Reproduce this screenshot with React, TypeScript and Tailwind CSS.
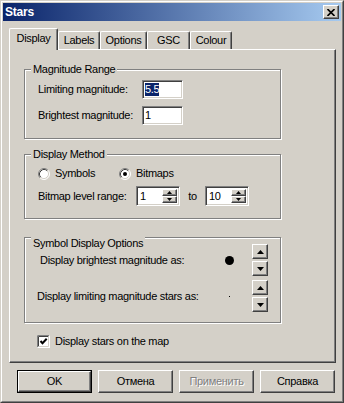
import React from "react";

const raised =
  "border border-t-white border-l-white border-r-[#404040] border-b-[#404040] shadow-[inset_-1px_-1px_0_#808080] bg-[#d4d0c8]";
const sunken =
  "border border-t-[#808080] border-l-[#808080] border-r-white border-b-white shadow-[inset_1px_1px_0_#404040,inset_-1px_-1px_0_#d4d0c8] bg-white";

function Group({ title, className, children }: { title: string; className: string; children?: React.ReactNode }) {
  return (
    <div className={`w-[257px] border border-[#808080] shadow-[inset_1px_1px_0_#fff,1px_1px_0_#fff] ${className}`}>
      <div className="flex h-[13px] -mt-[7px] -mb-[6px] ml-[6px]">
        <span className="bg-[#d4d0c8] px-[2px] leading-[13px]">{title}</span>
      </div>
      {children}
    </div>
  );
}

function Radio({ checked }: { checked?: boolean }) {
  return (
    <svg width="12" height="12" viewBox="0 0 12 12">
      <circle cx="6" cy="6" r="5" fill="#fff" />
      <path d="M2.11 9.89 A5.5 5.5 0 0 1 9.89 2.11" fill="none" stroke="#808080" />
      <path d="M9.89 2.11 A5.5 5.5 0 0 1 2.11 9.89" fill="none" stroke="#fff" />
      <path d="M2.82 9.18 A4.5 4.5 0 0 1 9.18 2.82" fill="none" stroke="#404040" />
      <path d="M9.18 2.82 A4.5 4.5 0 0 1 2.82 9.18" fill="none" stroke="#d4d0c8" />
      {checked && <circle cx="6" cy="6" r="2" fill="#000" />}
    </svg>
  );
}

function Arrow({ up, w = 7 }: { up?: boolean; w?: number }) {
  const h = Math.ceil(w / 2);
  const pts = up ? `0,${h} ${w},${h} ${w / 2},0` : `0,0 ${w},0 ${w / 2},${h}`;
  return (
    <svg width={w} height={h} viewBox={`0 0 ${w} ${h}`}>
      <polygon points={pts} fill="#000" />
    </svg>
  );
}

function SpinEdit({ value }: { value: string }) {
  return (
    <div className={`${sunken} w-[44px] h-[20px] flex items-stretch p-[2px]`}>
      <span className="flex-1 pl-[1px] leading-[14px]">{value}</span>
      <div className="w-[15px] flex flex-col">
        <div className={`${raised} flex-1 flex items-center justify-center`}>
          <Arrow up w={5} />
        </div>
        <div className={`${raised} flex-1 flex items-center justify-center`}>
          <Arrow w={5} />
        </div>
      </div>
    </div>
  );
}

function BigSpin() {
  return (
    <div className="flex flex-col gap-[2px]">
      <div className={`${raised} w-[16px] h-[15px] flex items-center justify-center`}>
        <Arrow up />
      </div>
      <div className={`${raised} w-[16px] h-[15px] flex items-center justify-center`}>
        <Arrow />
      </div>
    </div>
  );
}

function Tab({ label, w, active }: { label: string; w: string; active?: boolean }) {
  return (
    <div
      className={`${w} ${
        active ? "h-[22px] -mb-px relative z-10 pt-[3px]" : "h-[18px] pt-[2px]"
      } bg-[#d4d0c8] border-t border-l border-r border-t-white border-l-white border-r-[#404040] shadow-[inset_-1px_0_0_#808080] rounded-t-[2px] text-center leading-[13px]`}
    >
      {label}
    </div>
  );
}

export default function App() {
  return (
    <div
      className="w-[344px] h-[403px] bg-[#d4d0c8] border border-t-[#d4d0c8] border-l-[#d4d0c8] border-r-[#404040] border-b-[#404040] text-[11px] tracking-[-0.3px] text-black"
      style={{ fontFamily: '"Liberation Sans", Arial, sans-serif' }}
    >
      <div className="h-full border border-t-white border-l-white border-r-[#808080] border-b-[#808080] p-px flex flex-col">
        <div className="h-[18px] flex items-center justify-between bg-[linear-gradient(to_right,#0a246a,#a6caf0)] pl-[2px] pr-[2px]">
          <span className="text-white font-bold text-[12px] tracking-[-0.2px]">Stars</span>
          <div className={`${raised} w-[16px] h-[14px] flex items-center justify-center`}>
            <svg width="8" height="7" viewBox="0 0 8 7">
              <path d="M0.5 0 L7.5 7 M7.5 0 L0.5 7" stroke="#000" strokeWidth="1.6" />
            </svg>
          </div>
        </div>

        <div className="pl-[6px] pt-[7px]">
          <div className="flex items-end h-[21px]">
            <Tab label="Display" w="w-[49px]" active />
            <Tab label="Labels" w="w-[42px]" />
            <Tab label="Options" w="w-[47px]" />
            <Tab label="GSC" w="w-[43px]" />
            <Tab label="Colour" w="w-[42px]" />
          </div>

          <div className="w-[327px] h-[314px] border border-t-white border-l-white border-r-[#404040] border-b-[#404040] shadow-[inset_-1px_-1px_0_#808080] pl-[14px] pt-[19px]">
            <Group title="Magnitude Range" className="h-[70px]">
              <div className="flex items-center mt-[10px] pl-[13px]">
                <span className="w-[104px]">Limiting magnitude:</span>
                <div className={`${sunken} w-[41px] h-[19px] flex items-center pl-[2px]`}>
                  <span className="bg-[#0a246a] text-white leading-[13px]">5.5</span>
                </div>
              </div>
              <div className="flex items-center mt-[7px] pl-[13px]">
                <span className="w-[104px]">Brightest magnitude:</span>
                <div className={`${sunken} w-[41px] h-[19px] flex items-center pl-[2px]`}>
                  <span className="leading-[13px]">1</span>
                </div>
              </div>
            </Group>

            <Group title="Display Method" className="h-[65px] mt-[15px]">
              <div className="flex items-center h-[13px] mt-[12px] pl-[13px]">
                <Radio />
                <span className="ml-[5px] w-[64px]">Symbols</span>
                <Radio checked />
                <span className="ml-[5px]">Bitmaps</span>
              </div>
              <div className="flex items-center mt-[6px] pl-[13px]">
                <span className="w-[98px]">Bitmap level range:</span>
                <SpinEdit value="1" />
                <span className="w-[25px] text-center">to</span>
                <SpinEdit value="10" />
              </div>
            </Group>

            <Group title="Symbol Display Options" className="h-[86px] mt-[18px] pt-[6px]">
              <div className="flex items-center">
                <span className="w-[195px] pl-[15px]">Display brightest magnitude as:</span>
                <div className="w-[18px] flex justify-center">
                  <div className="w-[9px] h-[9px] rounded-full bg-black" />
                </div>
                <div className="ml-[14px]">
                  <BigSpin />
                </div>
              </div>
              <div className="flex items-center mt-[4px]">
                <span className="w-[195px] pl-[12px]">Display limiting magnitude stars as:</span>
                <div className="w-[18px] flex justify-center">
                  <div className="w-px h-px bg-black" />
                </div>
                <div className="ml-[14px]">
                  <BigSpin />
                </div>
              </div>
            </Group>

            <div className="flex items-center mt-[10px] ml-[13px]">
              <svg width="13" height="13" viewBox="0 0 13 13">
                <rect x="0" y="0" width="13" height="13" fill="#fff" />
                <path d="M0.5 12.5 V0.5 H12.5" fill="none" stroke="#808080" />
                <path d="M0.5 12.5 H12.5 V0.5" fill="none" stroke="#fff" />
                <path d="M1.5 11.5 V1.5 H11.5" fill="none" stroke="#404040" />
                <path d="M1.5 11.5 H11.5 V1.5" fill="none" stroke="#d4d0c8" />
                <polyline points="3.5,6 5.5,8.2 9.7,3.8" fill="none" stroke="#000" strokeWidth="2" />
              </svg>
              <span className="ml-[5px]">Display stars on the map</span>
            </div>
          </div>

          <div className="flex gap-[6px] mt-[7px] ml-[8px]">
            <div className="w-[75px] h-[23px] border border-black">
              <div className={`${raised} h-full flex items-center justify-center`}>OK</div>
            </div>
            <div className={`${raised} w-[75px] h-[23px] flex items-center justify-center`}>Отмена</div>
            <div className={`${raised} w-[75px] h-[23px] flex items-center justify-center text-[#808080] [text-shadow:1px_1px_0_#fff]`}>
              Применить
            </div>
            <div className={`${raised} w-[75px] h-[23px] flex items-center justify-center`}>Справка</div>
          </div>
        </div>
      </div>
    </div>
  );
}
